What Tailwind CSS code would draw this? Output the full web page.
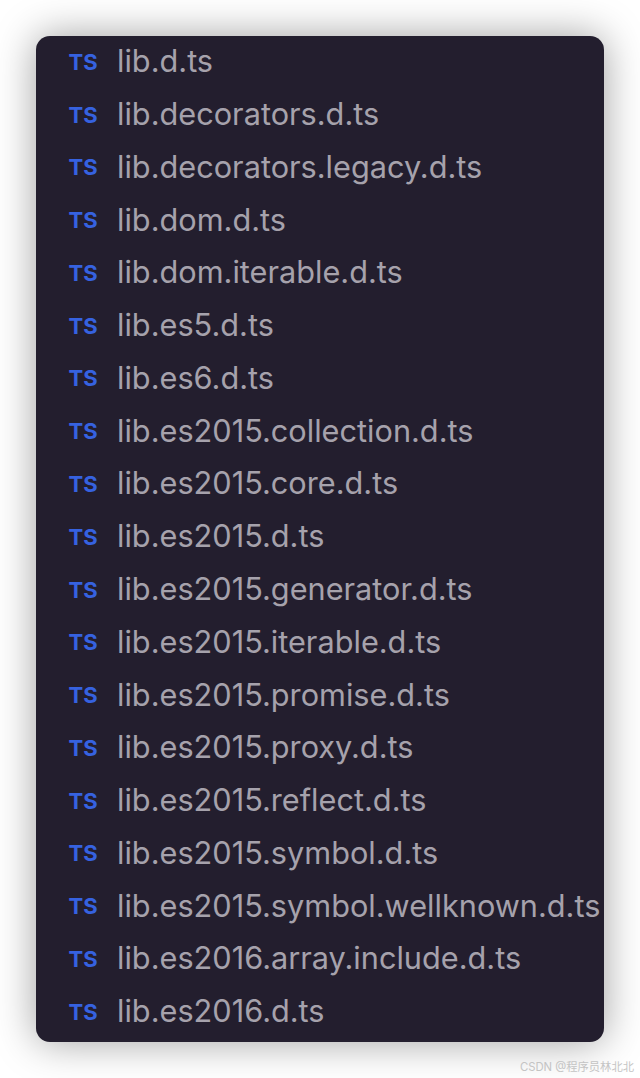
<!DOCTYPE html>
<html lang="en">
<head>
  <meta charset="UTF-8" />
  <title>File list</title>
  <script src="https://cdn.jsdelivr.net/npm/@tailwindcss/browser@4"></script>
</head>
<body class="bg-white h-[1078px] overflow-hidden font-['Inter',sans-serif]">
  <div class="relative h-full pt-[36px] px-[36px]">

    <!-- File list -->
    <ul class="h-[1006px] rounded-[14px] bg-[#231e2e] shadow-[0_0_40px_rgba(0,0,0,0.38)] overflow-hidden">
      <li class="flex items-center h-[52.78px] pl-[32.5px]"><span class="w-[48.5px] text-[22px] font-bold text-[#3662e0]">TS</span><span class="-mt-[2px] text-[30.7px] text-[#a6a2ac] whitespace-nowrap">lib.d.ts</span></li>
      <li class="flex items-center h-[52.78px] pl-[32.5px]"><span class="w-[48.5px] text-[22px] font-bold text-[#3662e0]">TS</span><span class="-mt-[2px] text-[30.7px] text-[#a6a2ac] whitespace-nowrap">lib.decorators.d.ts</span></li>
      <li class="flex items-center h-[52.78px] pl-[32.5px]"><span class="w-[48.5px] text-[22px] font-bold text-[#3662e0]">TS</span><span class="-mt-[2px] text-[30.7px] text-[#a6a2ac] whitespace-nowrap">lib.decorators.legacy.d.ts</span></li>
      <li class="flex items-center h-[52.78px] pl-[32.5px]"><span class="w-[48.5px] text-[22px] font-bold text-[#3662e0]">TS</span><span class="-mt-[2px] text-[30.7px] text-[#a6a2ac] whitespace-nowrap">lib.dom.d.ts</span></li>
      <li class="flex items-center h-[52.78px] pl-[32.5px]"><span class="w-[48.5px] text-[22px] font-bold text-[#3662e0]">TS</span><span class="-mt-[2px] text-[30.7px] text-[#a6a2ac] whitespace-nowrap">lib.dom.iterable.d.ts</span></li>
      <li class="flex items-center h-[52.78px] pl-[32.5px]"><span class="w-[48.5px] text-[22px] font-bold text-[#3662e0]">TS</span><span class="-mt-[2px] text-[30.7px] text-[#a6a2ac] whitespace-nowrap">lib.es5.d.ts</span></li>
      <li class="flex items-center h-[52.78px] pl-[32.5px]"><span class="w-[48.5px] text-[22px] font-bold text-[#3662e0]">TS</span><span class="-mt-[2px] text-[30.7px] text-[#a6a2ac] whitespace-nowrap">lib.es6.d.ts</span></li>
      <li class="flex items-center h-[52.78px] pl-[32.5px]"><span class="w-[48.5px] text-[22px] font-bold text-[#3662e0]">TS</span><span class="-mt-[2px] text-[30.7px] text-[#a6a2ac] whitespace-nowrap">lib.es2015.collection.d.ts</span></li>
      <li class="flex items-center h-[52.78px] pl-[32.5px]"><span class="w-[48.5px] text-[22px] font-bold text-[#3662e0]">TS</span><span class="-mt-[2px] text-[30.7px] text-[#a6a2ac] whitespace-nowrap">lib.es2015.core.d.ts</span></li>
      <li class="flex items-center h-[52.78px] pl-[32.5px]"><span class="w-[48.5px] text-[22px] font-bold text-[#3662e0]">TS</span><span class="-mt-[2px] text-[30.7px] text-[#a6a2ac] whitespace-nowrap">lib.es2015.d.ts</span></li>
      <li class="flex items-center h-[52.78px] pl-[32.5px]"><span class="w-[48.5px] text-[22px] font-bold text-[#3662e0]">TS</span><span class="-mt-[2px] text-[30.7px] text-[#a6a2ac] whitespace-nowrap">lib.es2015.generator.d.ts</span></li>
      <li class="flex items-center h-[52.78px] pl-[32.5px]"><span class="w-[48.5px] text-[22px] font-bold text-[#3662e0]">TS</span><span class="-mt-[2px] text-[30.7px] text-[#a6a2ac] whitespace-nowrap">lib.es2015.iterable.d.ts</span></li>
      <li class="flex items-center h-[52.78px] pl-[32.5px]"><span class="w-[48.5px] text-[22px] font-bold text-[#3662e0]">TS</span><span class="-mt-[2px] text-[30.7px] text-[#a6a2ac] whitespace-nowrap">lib.es2015.promise.d.ts</span></li>
      <li class="flex items-center h-[52.78px] pl-[32.5px]"><span class="w-[48.5px] text-[22px] font-bold text-[#3662e0]">TS</span><span class="-mt-[2px] text-[30.7px] text-[#a6a2ac] whitespace-nowrap">lib.es2015.proxy.d.ts</span></li>
      <li class="flex items-center h-[52.78px] pl-[32.5px]"><span class="w-[48.5px] text-[22px] font-bold text-[#3662e0]">TS</span><span class="-mt-[2px] text-[30.7px] text-[#a6a2ac] whitespace-nowrap">lib.es2015.reflect.d.ts</span></li>
      <li class="flex items-center h-[52.78px] pl-[32.5px]"><span class="w-[48.5px] text-[22px] font-bold text-[#3662e0]">TS</span><span class="-mt-[2px] text-[30.7px] text-[#a6a2ac] whitespace-nowrap">lib.es2015.symbol.d.ts</span></li>
      <li class="flex items-center h-[52.78px] pl-[32.5px]"><span class="w-[48.5px] text-[22px] font-bold text-[#3662e0]">TS</span><span class="-mt-[2px] text-[30.7px] text-[#a6a2ac] whitespace-nowrap">lib.es2015.symbol.wellknown.d.ts</span></li>
      <li class="flex items-center h-[52.78px] pl-[32.5px]"><span class="w-[48.5px] text-[22px] font-bold text-[#3662e0]">TS</span><span class="-mt-[2px] text-[30.7px] text-[#a6a2ac] whitespace-nowrap">lib.es2016.array.include.d.ts</span></li>
      <li class="flex items-center h-[52.78px] pl-[32.5px]"><span class="w-[48.5px] text-[22px] font-bold text-[#3662e0]">TS</span><span class="-mt-[2px] text-[30.7px] text-[#a6a2ac] whitespace-nowrap">lib.es2016.d.ts</span></li>
    </ul>

    <!-- Watermark -->
    <div class="absolute right-[6px] bottom-[2px] text-[11.3px] text-[#c4c4c4] font-['Inter','Noto_Sans_CJK_SC',sans-serif]">CSDN @程序员林北北</div>
  </div>
</body>
</html>
